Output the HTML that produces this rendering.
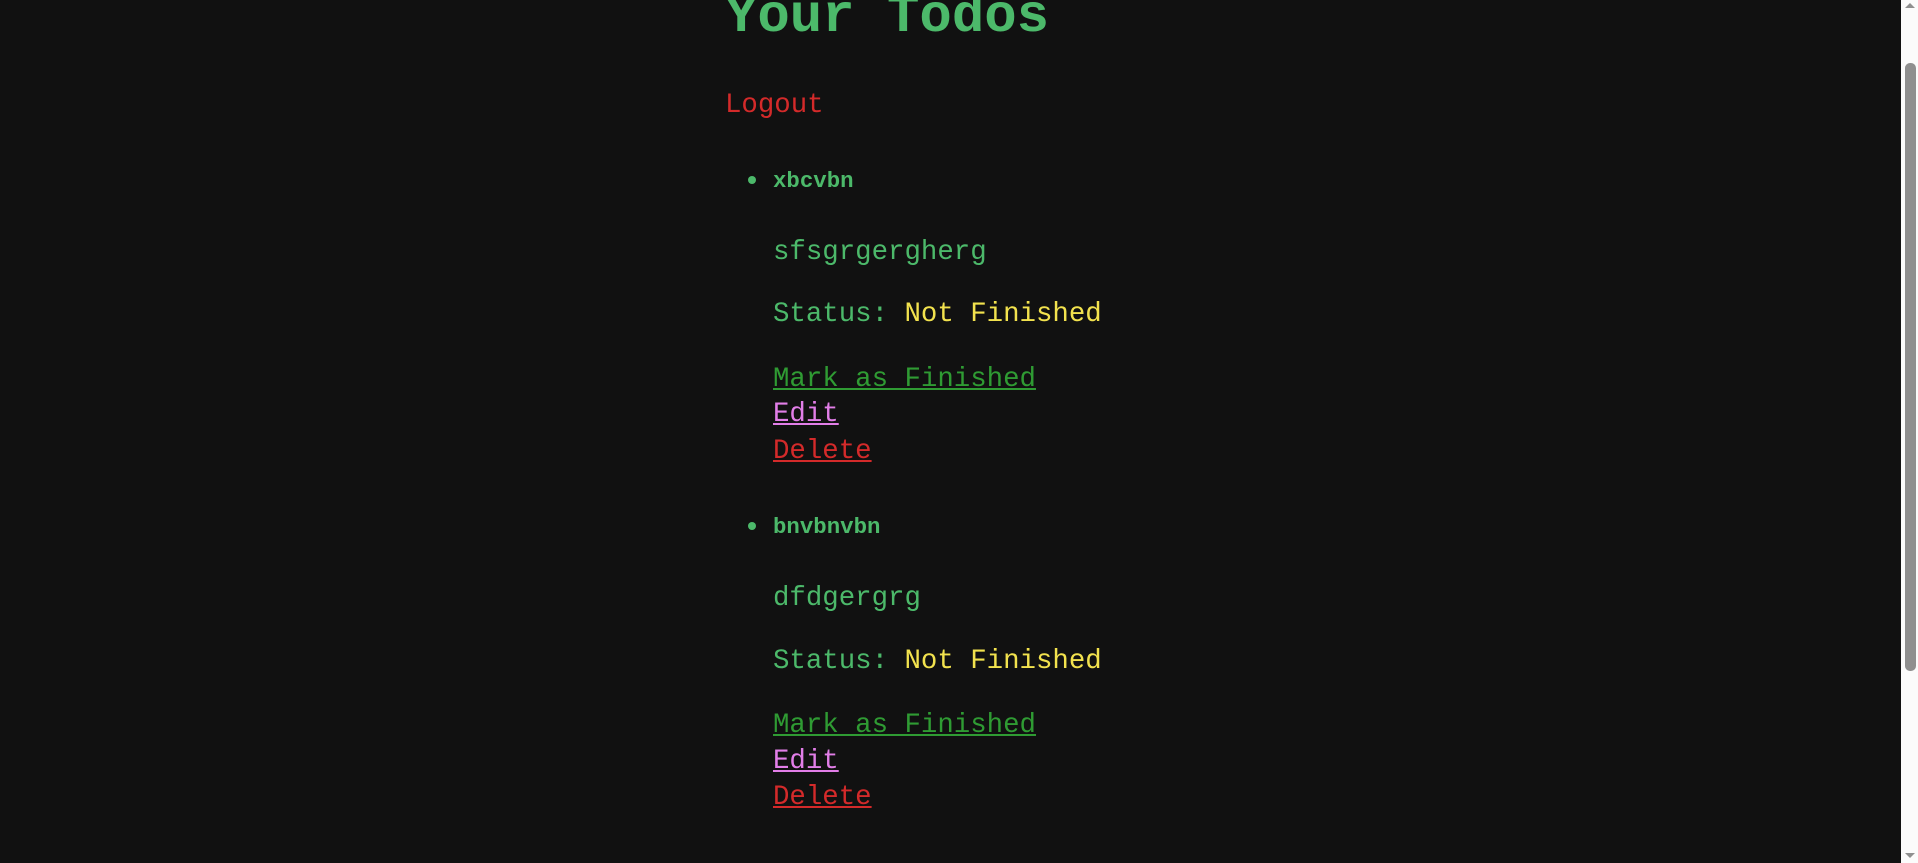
<!DOCTYPE html>
<html><head><meta charset="utf-8"><style>
html,body{margin:0;padding:0;background:#111111;width:1918px;height:863px;overflow:hidden;font-family:"Liberation Mono","DejaVu Sans Mono",monospace;}
.t{position:absolute;white-space:nowrap;line-height:30px;height:30px;font-size:27.4px;}
.g{color:#4cb96a}.r{color:#d42a2a}.y{color:#f2e24e}.m{color:#2f9b33;text-decoration:underline}.e{color:#e27ee8;text-decoration:underline}.d{color:#d42a2a;text-decoration:underline}
.b{font-weight:bold;font-size:22.4px}
.dot{position:absolute;width:8px;height:8px;border-radius:50%;background:#4cb96a}
.sb{position:absolute;left:1901px;top:0;width:17px;height:863px;background:#fbfbfb}
.th{position:absolute;left:1905px;top:63px;width:11px;height:608px;border-radius:5px;background:#8f8f8f}
</style></head><body>
<div class="t g" style="left:725px;top:-7px;font-size:54px;line-height:50px;height:50px;font-weight:bold">Your Todos</div>
<div class="t r" style="left:725px;top:91px">Logout</div>

<div class="dot" style="left:748px;top:176px"></div>
<div class="t g b" style="left:773px;top:166px">xbcvbn</div>
<div class="t g" style="left:773px;top:238px">sfsgrgergherg</div>
<div class="t g" style="left:773px;top:300px">Status: <span class="y">Not Finished</span></div>
<div class="t m" style="left:773px;top:365px">Mark as Finished</div>
<div class="t e" style="left:773px;top:400px">Edit</div>
<div class="t d" style="left:773px;top:437px">Delete</div>

<div class="dot" style="left:748px;top:522px"></div>
<div class="t g b" style="left:773px;top:512px">bnvbnvbn</div>
<div class="t g" style="left:773px;top:584px">dfdgergrg</div>
<div class="t g" style="left:773px;top:647px">Status: <span class="y">Not Finished</span></div>
<div class="t m" style="left:773px;top:711px">Mark as Finished</div>
<div class="t e" style="left:773px;top:747px">Edit</div>
<div class="t d" style="left:773px;top:783px">Delete</div>

<div class="sb"></div><div class="th"></div>
<div style="position:absolute;left:1905px;top:3px;width:0;height:0;border-left:5px solid transparent;border-right:5px solid transparent;border-bottom:5px solid #8f8f8f"></div>
<div style="position:absolute;left:1905px;top:853px;width:0;height:0;border-left:5px solid transparent;border-right:5px solid transparent;border-top:5px solid #8f8f8f"></div>
</body></html>
